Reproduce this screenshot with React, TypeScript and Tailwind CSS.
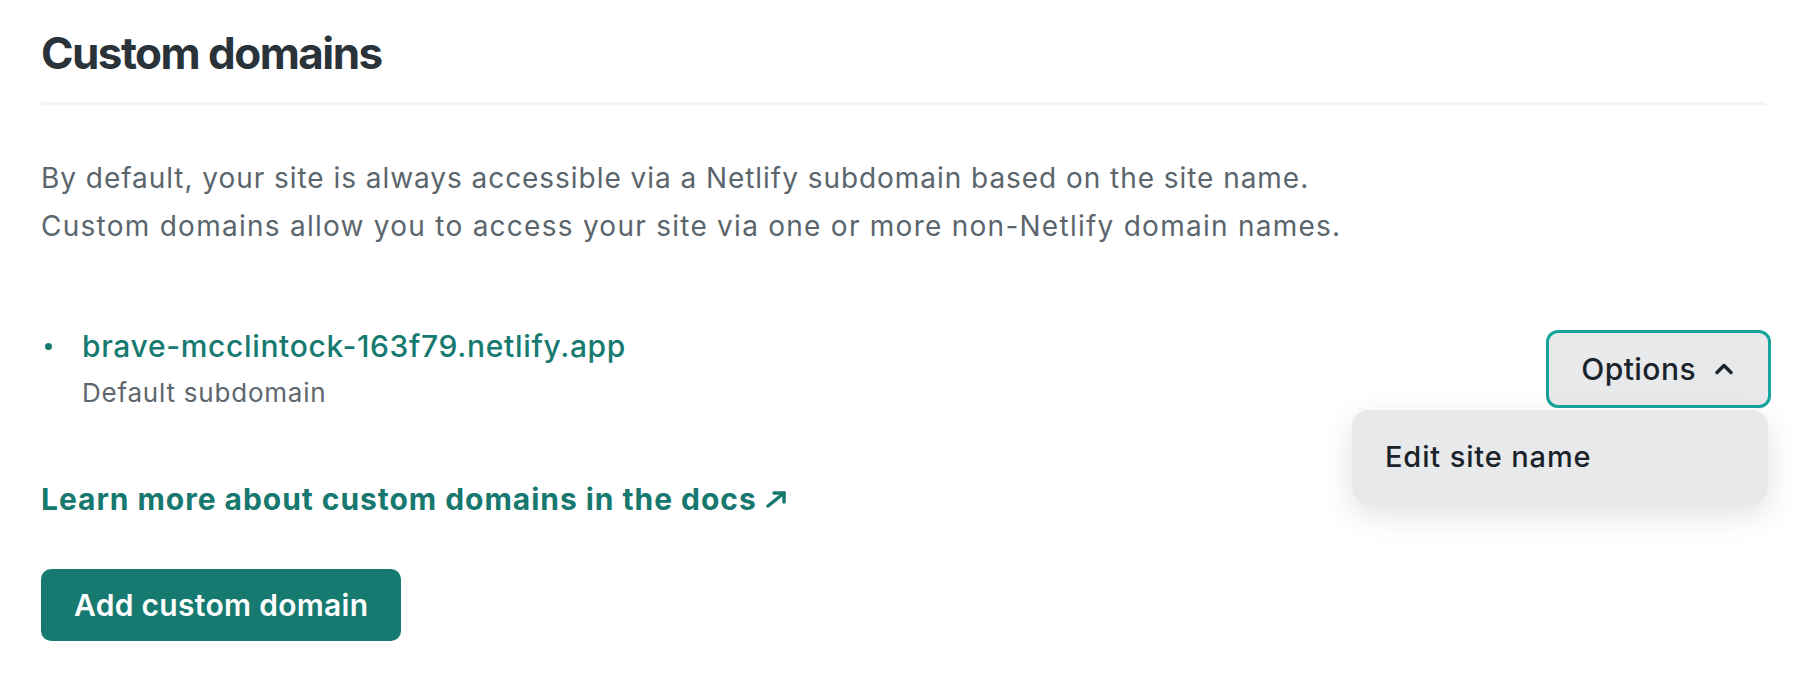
import { ChevronUp } from 'lucide-react';

function DomainRow() {
  return (
    <div className="flex items-start justify-between">
      <div className="flex flex-col">
        <div className="flex items-center">
          <span className="w-[7px] h-[7px] rounded-full bg-[#167a70] ml-[4px] mr-[30px]" />
          <a className="text-[30px] leading-[40px] font-medium tracking-[0.022em] text-[#167a70]">
            brave-mcclintock-163f79.netlify.app
          </a>
        </div>
        <span className="mt-[9px] ml-[41px] text-[26px] leading-[36px] tracking-[0.03em] text-[#5e676e]">
          Default subdomain
        </span>
      </div>

      <div className="relative mt-[4px]">
        <button className="flex items-center gap-[14px] h-[78px] pl-[32px] pr-[30px] rounded-[12px] border-[3px] border-[#16a59b] bg-[#e8e9eb] text-[30px] font-medium tracking-[0.015em] text-[#1b232a]">
          Options
          <ChevronUp size={28} strokeWidth={3} />
        </button>
        <div className="absolute top-full right-[3px] mt-[2px] w-[416px] h-[94px] flex items-center px-[33px] rounded-[16px] bg-[#e8e9eb] shadow-[0_10px_32px_rgba(0,0,0,0.12)] text-[29px] font-medium tracking-[0.03em] text-[#1b232a]">
          Edit site name
        </div>
      </div>
    </div>
  );
}

export default function App() {
  return (
    <div className="min-h-screen bg-white font-['Inter',sans-serif]">
      <section className="pl-[41px] pr-[35px] pt-[25px]">
        <h2 className="text-[44px] leading-[56px] font-bold tracking-[-0.035em] text-[#2a3339]">
          Custom domains
        </h2>
        <div className="mt-[21px] mr-[5px] h-[3px] bg-[#f3f5f5]" />

        <p className="mt-[49px] text-[28px] leading-[48px] tracking-[0.034em] text-[#5b656c]">
          By default, your site is always accessible via a Netlify subdomain based on the site name.
          <br />
          <span className="tracking-[0.045em]">
            Custom domains allow you to access your site via one or more non-Netlify domain names.
          </span>
        </p>

        <div className="mt-[76px]">
          <DomainRow />
        </div>

        <a className="mt-[70px] flex items-center gap-[8px] text-[30px] leading-[36px] font-bold tracking-[0.032em] text-[#16786e]">
          Learn more about custom domains in the docs
          <svg width="22" height="18" viewBox="0 0 22 18" fill="none" stroke="currentColor" strokeWidth="3.5" strokeLinecap="round" strokeLinejoin="round">
            <path d="M3 16 L19 3" />
            <path d="M9 3 H19 V12" />
          </svg>
        </a>

        <button className="mt-[52px] h-[72px] px-[33px] rounded-[10px] bg-[#177a70] text-[30px] font-semibold tracking-[0.01em] text-white">
          Add custom domain
        </button>
      </section>
    </div>
  );
}
